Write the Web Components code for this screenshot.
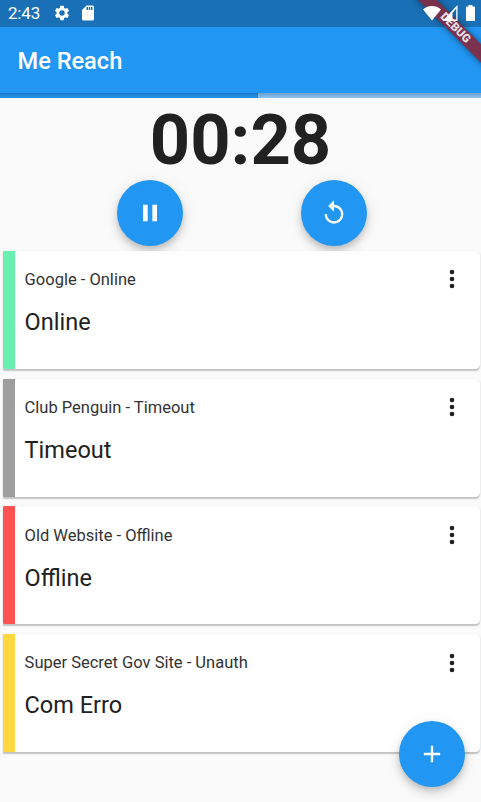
<!DOCTYPE html>
<html lang="en">
<head>
<meta charset="utf-8">
<title>Me Reach</title>
<style>
html,body{margin:0;height:100%;overflow:hidden}
body{font-family:Roboto,"Noto Sans",sans-serif;background:#fafafa;color:#212121}
</style>
</head>
<body>
<reach-app></reach-app>
<script>
const define = (name, html) => {
  const t = document.createElement('template');
  t.innerHTML = html;
  customElements.define(name, class extends HTMLElement {
    constructor() {
      super();
      this.attachShadow({mode: 'open'}).append(t.content.cloneNode(true));
    }
  });
};

define('status-bar', `
<style>
:host{display:flex;height:27px;box-sizing:border-box;padding:0 6px 0 8px;background:#1a70b6;color:#fff;align-items:center;justify-content:space-between}
div{display:flex;align-items:center}
span{font-size:17px;line-height:27px;width:44.6px;letter-spacing:-.2px}
svg{display:block;fill:#fff;position:relative;z-index:3}
</style>
<div><span>2:43</span>
<svg width="18" height="18" viewBox="0 0 24 24" style="margin-top:-1px"><path d="M19.14 12.94c.04-.3.06-.61.06-.94s-.02-.64-.07-.94l2.03-1.58a.49.49 0 0 0 .12-.61l-1.92-3.32a.49.49 0 0 0-.59-.22l-2.39.96a7 7 0 0 0-1.62-.94l-.36-2.54a.48.48 0 0 0-.48-.41h-3.84a.47.47 0 0 0-.47.41l-.36 2.54c-.59.24-1.13.57-1.62.94l-2.39-.96a.48.48 0 0 0-.59.22L2.74 8.87a.47.47 0 0 0 .12.61l2.03 1.58c-.05.3-.09.63-.09.94s.02.64.07.94l-2.03 1.58a.49.49 0 0 0-.12.61l1.92 3.32c.12.22.37.29.59.22l2.39-.96c.5.38 1.03.7 1.62.94l.36 2.54c.05.24.24.41.48.41h3.84c.24 0 .44-.17.47-.41l.36-2.54a7 7 0 0 0 1.62-.94l2.39.96c.22.08.47 0 .59-.22l1.92-3.32a.47.47 0 0 0-.12-.61zM12 15.6a3.6 3.6 0 1 1 0-7.2 3.6 3.6 0 0 1 0 7.2z"/></svg>
<svg width="18" height="18" viewBox="0 0 24 24" style="margin:-2px 0 0 8px"><path d="M18 2h-8L4.02 8 4 20c0 1.1.9 2 2 2h12a2 2 0 0 0 2-2V4a2 2 0 0 0-2-2zm-6 6h-2V4h2zm3 0h-2V4h2zm3 0h-2V4h2z"/></svg></div>
<div style="margin-top:-2px">
<svg width="18" height="16" viewBox="0 0 18 16"><path d="M0 4.4C5-.1 13-.1 18 4.4L9 15.5z"/></svg>
<svg width="18" height="16" viewBox="0 0 18 16"><path fill-rule="evenodd" d="M16.5 0v16H1.5zM15.2 3.6L11.5 8v6.5h3.7z"/></svg>
<svg width="9" height="16" viewBox="0 0 9 16" style="margin-left:7px"><path d="M2.6 0h3.8v1.6H8.2a.8.8 0 0 1 .8.8v12.8a.8.8 0 0 1-.8.8H.8a.8.8 0 0 1-.8-.8V2.4a.8.8 0 0 1 .8-.8h1.8z"/></svg>
</div>`);

define('debug-ribbon', `
<style>
:host{position:absolute;z-index:2;top:0;right:0;width:100px;height:100px;overflow:hidden;pointer-events:none}
div{position:absolute;left:23.4px;top:20.3px;width:100px;height:12.8px;transform:rotate(45deg);background:rgba(128,44,68,.94);box-shadow:0 0 7px rgba(0,0,0,.45);color:#e4dfe2;font-weight:900;font-size:11.6px;line-height:13px;text-align:center}
span{position:relative;left:2px}
</style><div><span><slot></slot></span></div>`);

define('app-header', `
<style>
:host{display:flex;align-items:center;height:65.5px;padding:0 17.5px;background:#2196f3;color:#fff;font-size:23.6px;font-weight:500;line-height:28px}
span{display:block;padding-top:3px}
</style><span><slot></slot></span>`);

define('progress-line', `
<style>
:host{display:block;height:5.2px;background:linear-gradient(#6ba1d0,#8fc2ee)}
div{width:257.5px;height:100%;background:linear-gradient(#1976c6,#2088dc 45%,#218fe8)}
</style><div></div>`);

define('round-button', `
<style>
:host{display:flex;width:66px;height:66px;flex:none;border-radius:50%;background:#2196f3;align-items:center;justify-content:center;box-shadow:0 3.5px 6px -1px rgba(0,0,0,.17),0 6px 11px rgba(0,0,0,.11),0 1px 18px rgba(0,0,0,.06)}
::slotted(svg){display:block;width:28px;height:28px;fill:#fff}
</style><slot></slot>`);

define('timer-panel', `
<style>
:host{display:block;height:153.3px;overflow:hidden}
.time{font-size:70.4px;font-weight:700;line-height:85px;height:82.8px;text-align:center;color:#212121}
.row{display:flex;gap:118px;padding-left:116.6px}
</style><div class="time"><slot name="time"></slot></div><div class="row"><slot></slot></div>`);

define('site-card', `
<style>
:host{display:flex;height:118px;margin:0 1px 9.7px 3.3px;background:#fff;border-radius:1px 4.5px 4.5px 1px;overflow:hidden;box-shadow:0 1.2px 1.5px rgba(0,0,0,.22),0 0 1.5px rgba(0,0,0,.08)}
.bar{width:11.7px;background:var(--tone);flex:none}
.body{flex:1;padding:19.3px 0 0 9.6px}
.name{font-size:16.5px;line-height:20px;color:#333}
.state{font-size:23.5px;line-height:28px;margin-top:18px;color:#212121}
svg{width:28px;height:28px;margin:14.5px 14.4px 0 0;fill:#212121;flex:none}
</style>
<div class="bar"></div>
<div class="body"><div class="name"><slot name="name"></slot></div><div class="state"><slot></slot></div></div>
<svg viewBox="0 0 24 24"><circle cx="12" cy="6" r="2"/><circle cx="12" cy="12" r="2"/><circle cx="12" cy="18" r="2"/></svg>`);

define('reach-app', `
<style>
:host{display:block;position:relative;width:481px;height:802px;overflow:hidden;background:#fafafa}
.add{position:absolute;left:399.4px;top:720.6px}
</style>
<status-bar></status-bar>
<app-header>Me Reach</app-header>
<progress-line></progress-line>
<timer-panel><span slot="time">00:28</span>
<round-button><svg viewBox="0 0 24 24"><path d="M6 19h4V5H6zm8-14v14h4V5z"/></svg></round-button>
<round-button><svg viewBox="0 0 24 24"><path d="M12 5V1L7 6l5 5V7c3.31 0 6 2.69 6 6s-2.69 6-6 6-6-2.69-6-6H4c0 4.42 3.58 8 8 8s8-3.58 8-8-3.58-8-8-8z"/></svg></round-button>
</timer-panel>
<main>
<site-card style="--tone:#69f0ae"><span slot="name">Google - Online</span>Online</site-card>
<site-card style="--tone:#9e9e9e"><span slot="name">Club Penguin - Timeout</span>Timeout</site-card>
<site-card style="--tone:#ff5252"><span slot="name">Old Website - Offline</span>Offline</site-card>
<site-card style="--tone:#ffd740"><span slot="name">Super Secret Gov Site - Unauth</span>Com Erro</site-card>
</main>
<round-button class="add"><svg viewBox="0 0 24 24"><path d="M19 13h-6v6h-2v-6H5v-2h6V5h2v6h6z"/></svg></round-button>
<debug-ribbon>DEBUG</debug-ribbon>`);
</script>
</body>
</html>
